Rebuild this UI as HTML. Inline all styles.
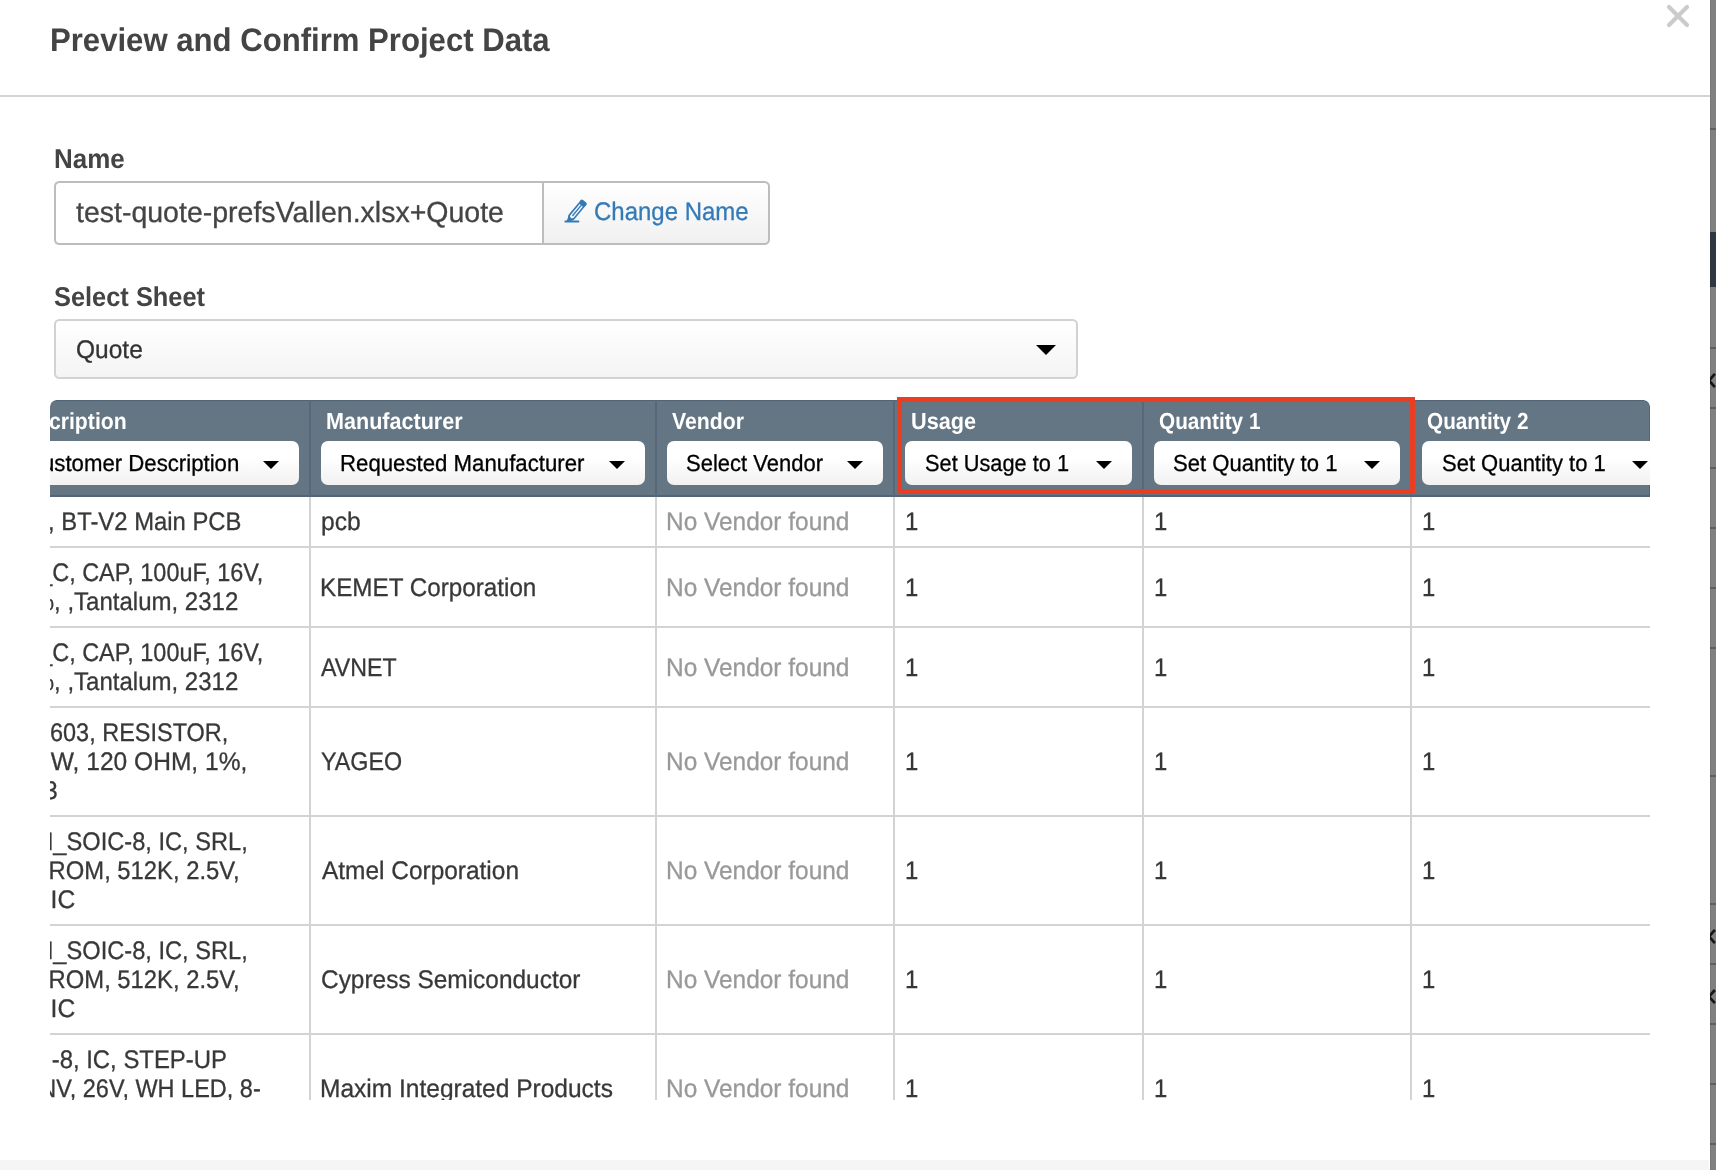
<!DOCTYPE html>
<html lang="en">
<head>
<meta charset="utf-8">
<title>Preview and Confirm Project Data</title>
<style>
*{box-sizing:border-box;}
html,body{margin:0;padding:0;}
body{width:1716px;height:1170px;overflow:hidden;background:#808080;position:relative;
  font-family:"Liberation Sans",sans-serif;color:#333;text-rendering:geometricPrecision;}
.bd-line{position:absolute;left:1710px;width:6px;height:2px;background:#5f5f5f;}
.bd-dark{position:absolute;left:1710px;width:6px;top:232px;height:55px;background:#2e3742;}
.modal{position:absolute;left:0;top:0;width:1710px;height:1170px;background:#fff;
  box-shadow:0.5px 0 1px rgba(0,0,0,.06);will-change:transform;-webkit-font-smoothing:antialiased;-webkit-text-stroke:0.3px;}
.x{position:absolute;transform-origin:0 0;line-height:40px;white-space:nowrap;}
.hdr-line{position:absolute;left:0;top:95px;width:1710px;height:2px;background:#d4d4d4;}
.title{font-size:32.7px;font-weight:bold;color:#444;-webkit-text-stroke:0;}
.close{position:absolute;left:1662px;top:0;width:32px;height:32px;}
.lbl{font-size:27.2px;font-weight:bold;color:#444;-webkit-text-stroke:0;}
.inp{position:absolute;left:54px;top:181px;width:490px;height:64px;border:2px solid #bdbdbd;border-right:0;
  border-radius:5.5px 0 0 5.5px;background:#fff;}
.inptxt{font-size:29.06px;color:#444;}
.btn{position:absolute;left:542px;top:181px;width:228px;height:64px;border:2px solid #bdbdbd;
  border-radius:0 5.5px 5.5px 0;background:linear-gradient(#fff,#f0f0f0);}
.btntxt{font-size:25.4px;color:#337ab7;}
.pencil{position:absolute;left:560px;top:196px;}
.sel{position:absolute;left:54px;top:319px;width:1024px;height:60px;border:2px solid #d2d2d2;border-radius:5.5px;
  background:linear-gradient(#fff,#f4f4f4);}
.seltxt{font-size:25.4px;color:#333;}
.tri{position:absolute;width:0;height:0;border-style:solid;border-color:#000 transparent transparent transparent;}
.tbl{position:absolute;left:50px;top:400px;width:1600px;height:699.5px;overflow:hidden;border-radius:6.5px 6.5px 0 0;font-size:25.4px;color:#383838;}
.thead{position:absolute;left:0;top:0;width:1600px;height:96.6px;background:#647584;border:solid #526476;border-width:1.7px 1px 2px 0;border-radius:6.5px 6.5px 0 0;}
.hdiv{position:absolute;top:0;width:2px;height:97px;background:#566879;}
.vdiv{position:absolute;top:97px;width:2px;height:610px;background:#d3d3d3;}
.hline{position:absolute;left:0;width:1600px;height:2px;background:#d3d3d3;}
.th{font-size:23.2px;font-weight:bold;color:#fff;-webkit-text-stroke:0;}
.hs{position:absolute;top:41px;height:44px;border-radius:7px;background:linear-gradient(#fff 40%,#f1f1f1);}
.hst{font-size:23.2px;color:#000;}
.hs .tri{top:20px;border-width:8px 8px 0 8px;}
.g{color:#999;}
.red{position:absolute;left:897px;top:397px;width:518px;height:97.2px;border:5px solid #e93e22;}
.footer{position:absolute;left:0;top:1160px;width:1709px;height:10px;background:#f5f5f5;}
</style>
</head>
<body>
<!-- backdrop (page behind modal) -->
<div class="bd-line" style="top:128px"></div>
<div class="bd-line" style="top:347px"></div>
<div class="bd-line" style="top:407px"></div>
<div class="bd-line" style="top:467px"></div>
<div class="bd-line" style="top:527px"></div>
<div class="bd-line" style="top:587px"></div>
<div class="bd-line" style="top:647px"></div>
<div class="bd-line" style="top:775px"></div>
<div class="bd-line" style="top:903px"></div>
<div class="bd-line" style="top:963px"></div>
<div class="bd-line" style="top:1023px"></div>
<div class="bd-line" style="top:1083px"></div>
<div class="bd-line" style="top:1143px"></div>
<div class="bd-dark"></div>
<svg style="position:absolute;left:1706px;top:0" width="10" height="1170" viewBox="1706 0 10 1170"><g fill="none" stroke="#161616" stroke-width="2.7"><path d="M1714.9 373.9 L1709.0 380.5 L1714.9 387.1"/><path d="M1714.9 929.9 L1709.0 936.5 L1714.9 943.1"/><path d="M1714.9 990.0 L1709.0 996.6 L1714.9 1003.2"/></g></svg>
<div class="modal">
<div class="x title" style="left:49.8px;top:20px;transform:scaleX(0.9517);">Preview and Confirm Project Data</div>
<svg class="close" viewBox="0 0 32 32"><path d="M7 7 L25 25 M25 7 L7 25" stroke="#cbcbcb" stroke-width="4.2" stroke-linecap="round" fill="none"/></svg>
<div class="hdr-line"></div>
<div class="x lbl" style="left:53.68px;top:139px;transform:scaleX(0.9546);">Name</div>
<div class="inp"></div>
<div class="x inptxt" style="left:76px;top:193px;transform:scaleX(0.9811);">test-quote-prefsVallen.xlsx+Quote</div>
<div class="btn"></div>
<svg class="pencil" width="30" height="30" viewBox="560 196 30 30"><g fill="#337ab7" stroke="none"><g transform="translate(571 217.7) rotate(-50.5)"><path d="M16.8 -2.9 L1.6 -2.9 A2.9 2.9 0 0 0 1.6 2.9 L16.8 2.9" fill="none" stroke="#337ab7" stroke-width="1.6"/><rect x="16" y="-3.75" width="5.4" height="7.5" rx="1.7"/><path d="M1.8 -3.75 L-5.2 -1.3 L-3.2 1.6 L1.8 3.75 L-0.6 0 Z"/><path d="M2.8 0 L15.6 0" fill="none" stroke="#337ab7" stroke-width="1.35" stroke-linecap="round"/></g><rect x="564.4" y="220.6" width="15" height="1.8" rx="0.9"/></g></svg>
<div class="x btntxt" style="left:594.37px;top:192px;transform:scaleX(0.9445);">Change Name</div>
<div class="x lbl" style="left:54.3px;top:277px;transform:scaleX(0.9342);">Select Sheet</div>
<div class="sel"><div class="tri" style="left:980px;top:24px;border-width:10px 10px 0 10px"></div></div>
<div class="x seltxt" style="left:75.54px;top:330px;transform:scaleX(0.9654);">Quote</div>
<div class="tbl">
<div class="thead"></div>
<div class="hdiv" style="left:259px"></div><div class="vdiv" style="left:259px"></div>
<div class="hdiv" style="left:605px"></div><div class="vdiv" style="left:605px"></div>
<div class="hdiv" style="left:843px"></div><div class="vdiv" style="left:843px"></div>
<div class="hdiv" style="left:1092px"></div><div class="vdiv" style="left:1092px"></div>
<div class="hdiv" style="left:1360px"></div><div class="vdiv" style="left:1360px"></div>
<div class="hline" style="top:146px"></div>
<div class="hline" style="top:226px"></div>
<div class="hline" style="top:306px"></div>
<div class="hline" style="top:415px"></div>
<div class="hline" style="top:524px"></div>
<div class="hline" style="top:633px"></div>
<div class="x th" style="left:-39.72px;top:1px;transform:scaleX(0.915);">Description</div>
<div class="x th" style="left:276.1px;top:1px;transform:scaleX(0.9302);">Manufacturer</div>
<div class="x th" style="left:622.21px;top:1px;transform:scaleX(0.9167);">Vendor</div>
<div class="x th" style="left:861.48px;top:1px;transform:scaleX(0.936);">Usage</div>
<div class="x th" style="left:1109.49px;top:1px;transform:scaleX(0.895);">Quantity 1</div>
<div class="x th" style="left:1377.49px;top:1px;transform:scaleX(0.895);">Quantity 2</div>
<div class="hs" style="left:-90px;width:339px"><div class="tri" style="left:303px"></div></div>
<div class="x hst" style="left:-23.95px;top:43px;transform:scaleX(0.9567);">Customer Description</div>
<div class="hs" style="left:271px;width:324px"><div class="tri" style="left:288px"></div></div>
<div class="x hst" style="left:289.88px;top:43px;transform:scaleX(0.958);">Requested Manufacturer</div>
<div class="hs" style="left:617px;width:216px"><div class="tri" style="left:180px"></div></div>
<div class="x hst" style="left:635.85px;top:43px;transform:scaleX(0.9495);">Select Vendor</div>
<div class="hs" style="left:855px;width:227px"><div class="tri" style="left:191px"></div></div>
<div class="x hst" style="left:875.26px;top:43px;transform:scaleX(0.9388);">Set Usage to 1</div>
<div class="hs" style="left:1104px;width:246px"><div class="tri" style="left:210px"></div></div>
<div class="x hst" style="left:1123.25px;top:43px;transform:scaleX(0.9519);">Set Quantity to 1</div>
<div class="hs" style="left:1372px;width:246px"><div class="tri" style="left:210px"></div></div>
<div class="x hst" style="left:1391.55px;top:43px;transform:scaleX(0.9478);">Set Quantity to 1</div>
<div class="x " style="left:-50.56px;top:102px;transform:scaleX(0.9389);">PCB, BT-V2 Main PCB</div>
<div class="x " style="left:-59.13px;top:153px;transform:scaleX(0.9228);">CAP_C, CAP, 100uF, 16V,</div>
<div class="x " style="left:-43.86px;top:182px;transform:scaleX(0.9456);">10%, ,Tantalum, 2312</div>
<div class="x " style="left:-59.13px;top:233px;transform:scaleX(0.9228);">CAP_C, CAP, 100uF, 16V,</div>
<div class="x " style="left:-43.86px;top:262px;transform:scaleX(0.9456);">10%, ,Tantalum, 2312</div>
<div class="x " style="left:-29.57px;top:313px;transform:scaleX(0.9244);">R0603, RESISTOR,</div>
<div class="x " style="left:-47.21px;top:342px;transform:scaleX(0.9671);">1/10W, 120 OHM, 1%,</div>
<div class="x " style="left:-46px;top:371px;transform:scaleX(0.95);">0603</div>
<div class="x " style="left:-61.2px;top:422px;transform:scaleX(0.9307);">SO8N_SOIC-8, IC, SRL,</div>
<div class="x " style="left:-49.11px;top:451px;transform:scaleX(0.9372);">EEPROM, 512K, 2.5V,</div>
<div class="x " style="left:-35.14px;top:480px;transform:scaleX(0.9704);">SOIC</div>
<div class="x " style="left:-61.2px;top:531px;transform:scaleX(0.9307);">SO8N_SOIC-8, IC, SRL,</div>
<div class="x " style="left:-49.11px;top:560px;transform:scaleX(0.9372);">EEPROM, 512K, 2.5V,</div>
<div class="x " style="left:-35.14px;top:589px;transform:scaleX(0.9704);">SOIC</div>
<div class="x " style="left:-61.76px;top:640px;transform:scaleX(0.941);">TDFN-8, IC, STEP-UP</div>
<div class="x " style="left:-46.21px;top:669px;transform:scaleX(0.9251);">CONV, 26V, WH LED, 8-</div>
<div class="x " style="left:270.55px;top:102px;transform:scaleX(0.97);">pcb</div>
<div class="x g" style="left:615.58px;top:102px;transform:scaleX(0.9625);">No Vendor found</div>
<div class="x" style="left:855.3px;top:102px;transform:scaleX(0.94)">1</div>
<div class="x" style="left:1103.6px;top:102px;transform:scaleX(0.94)">1</div>
<div class="x" style="left:1371.6px;top:102px;transform:scaleX(0.94)">1</div>
<div class="x " style="left:270.19px;top:168px;transform:scaleX(0.9542);">KEMET Corporation</div>
<div class="x g" style="left:615.58px;top:168px;transform:scaleX(0.9625);">No Vendor found</div>
<div class="x" style="left:855.3px;top:168px;transform:scaleX(0.94)">1</div>
<div class="x" style="left:1103.6px;top:168px;transform:scaleX(0.94)">1</div>
<div class="x" style="left:1371.6px;top:168px;transform:scaleX(0.94)">1</div>
<div class="x " style="left:271.4px;top:248px;transform:scaleX(0.9127);">AVNET</div>
<div class="x g" style="left:615.58px;top:248px;transform:scaleX(0.9625);">No Vendor found</div>
<div class="x" style="left:855.3px;top:248px;transform:scaleX(0.94)">1</div>
<div class="x" style="left:1103.6px;top:248px;transform:scaleX(0.94)">1</div>
<div class="x" style="left:1371.6px;top:248px;transform:scaleX(0.94)">1</div>
<div class="x " style="left:270.94px;top:342px;transform:scaleX(0.9182);">YAGEO</div>
<div class="x g" style="left:615.58px;top:342px;transform:scaleX(0.9625);">No Vendor found</div>
<div class="x" style="left:855.3px;top:342px;transform:scaleX(0.94)">1</div>
<div class="x" style="left:1103.6px;top:342px;transform:scaleX(0.94)">1</div>
<div class="x" style="left:1371.6px;top:342px;transform:scaleX(0.94)">1</div>
<div class="x " style="left:271.6px;top:451px;transform:scaleX(0.9627);">Atmel Corporation</div>
<div class="x g" style="left:615.58px;top:451px;transform:scaleX(0.9625);">No Vendor found</div>
<div class="x" style="left:855.3px;top:451px;transform:scaleX(0.94)">1</div>
<div class="x" style="left:1103.6px;top:451px;transform:scaleX(0.94)">1</div>
<div class="x" style="left:1371.6px;top:451px;transform:scaleX(0.94)">1</div>
<div class="x " style="left:270.95px;top:560px;transform:scaleX(0.9624);">Cypress Semiconductor</div>
<div class="x g" style="left:615.58px;top:560px;transform:scaleX(0.9625);">No Vendor found</div>
<div class="x" style="left:855.3px;top:560px;transform:scaleX(0.94)">1</div>
<div class="x" style="left:1103.6px;top:560px;transform:scaleX(0.94)">1</div>
<div class="x" style="left:1371.6px;top:560px;transform:scaleX(0.94)">1</div>
<div class="x " style="left:270.17px;top:669px;transform:scaleX(0.9655);">Maxim Integrated Products</div>
<div class="x g" style="left:615.58px;top:669px;transform:scaleX(0.9625);">No Vendor found</div>
<div class="x" style="left:855.3px;top:669px;transform:scaleX(0.94)">1</div>
<div class="x" style="left:1103.6px;top:669px;transform:scaleX(0.94)">1</div>
<div class="x" style="left:1371.6px;top:669px;transform:scaleX(0.94)">1</div>
</div>
<div class="red"></div>
<div class="footer"></div>
</div>
</body>
</html>
